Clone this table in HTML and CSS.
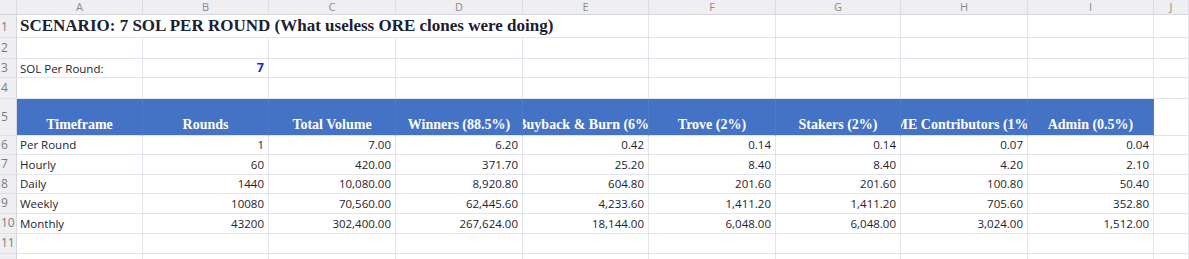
FILE: index.html
```html
<!DOCTYPE html>
<html>
<head>
<meta charset="utf-8">
<link rel="stylesheet" href="styles.css">
</head>
<body>
<div class="sheet">
  <div class="row hdr">
    <div class="c corner"></div>
    <div class="c colh">A</div><div class="c colh">B</div><div class="c colh">C</div><div class="c colh">D</div><div class="c colh">E</div><div class="c colh">F</div><div class="c colh">G</div><div class="c colh">H</div><div class="c colh">I</div><div class="c colh">J</div>
  </div>
  <div class="row r1">
    <div class="c rn">1</div>
    <div class="c nb"><span class="title">SCENARIO: 7 SOL PER ROUND (What useless ORE clones were doing)</span></div>
    <div class="c nb"></div><div class="c nb"></div><div class="c nb"></div><div class="c"></div><div class="c"></div><div class="c"></div><div class="c"></div><div class="c"></div><div class="c"></div>
  </div>
  <div class="row r2">
    <div class="c rn">2</div>
    <div class="c"></div><div class="c"></div><div class="c"></div><div class="c"></div><div class="c"></div><div class="c"></div><div class="c"></div><div class="c"></div><div class="c"></div><div class="c"></div>
  </div>
  <div class="row r3">
    <div class="c rn">3</div>
    <div class="c txt">SOL Per Round:</div><div class="c num input">7</div>
    <div class="c"></div><div class="c"></div><div class="c"></div><div class="c"></div><div class="c"></div><div class="c"></div><div class="c"></div><div class="c"></div>
  </div>
  <div class="row r4">
    <div class="c rn">4</div>
    <div class="c"></div><div class="c"></div><div class="c"></div><div class="c"></div><div class="c"></div><div class="c"></div><div class="c"></div><div class="c"></div><div class="c"></div><div class="c"></div>
  </div>
  <div class="row r5">
    <div class="c rn">5</div>
    <div class="c th"><span>Timeframe</span></div>
    <div class="c th"><span>Rounds</span></div>
    <div class="c th"><span>Total Volume</span></div>
    <div class="c th"><span>Winners (88.5%)</span></div>
    <div class="c th"><span>Buyback &amp; Burn (6%)</span></div>
    <div class="c th"><span>Trove (2%)</span></div>
    <div class="c th"><span>Stakers (2%)</span></div>
    <div class="c th"><span>ME Contributors (1%)</span></div>
    <div class="c th"><span>Admin (0.5%)</span></div>
    <div class="c"></div>
  </div>
  <div class="row r6">
    <div class="c rn">6</div>
    <div class="c txt">Per Round</div><div class="c num">1</div><div class="c num">7.00</div><div class="c num">6.20</div><div class="c num">0.42</div><div class="c num">0.14</div><div class="c num">0.14</div><div class="c num">0.07</div><div class="c num">0.04</div><div class="c"></div>
  </div>
  <div class="row r7">
    <div class="c rn">7</div>
    <div class="c txt">Hourly</div><div class="c num">60</div><div class="c num">420.00</div><div class="c num">371.70</div><div class="c num">25.20</div><div class="c num">8.40</div><div class="c num">8.40</div><div class="c num">4.20</div><div class="c num">2.10</div><div class="c"></div>
  </div>
  <div class="row r8">
    <div class="c rn">8</div>
    <div class="c txt">Daily</div><div class="c num">1440</div><div class="c num">10,080.00</div><div class="c num">8,920.80</div><div class="c num">604.80</div><div class="c num">201.60</div><div class="c num">201.60</div><div class="c num">100.80</div><div class="c num">50.40</div><div class="c"></div>
  </div>
  <div class="row r9">
    <div class="c rn">9</div>
    <div class="c txt">Weekly</div><div class="c num">10080</div><div class="c num">70,560.00</div><div class="c num">62,445.60</div><div class="c num">4,233.60</div><div class="c num">1,411.20</div><div class="c num">1,411.20</div><div class="c num">705.60</div><div class="c num">352.80</div><div class="c"></div>
  </div>
  <div class="row r10">
    <div class="c rn">10</div>
    <div class="c txt">Monthly</div><div class="c num">43200</div><div class="c num">302,400.00</div><div class="c num">267,624.00</div><div class="c num">18,144.00</div><div class="c num">6,048.00</div><div class="c num">6,048.00</div><div class="c num">3,024.00</div><div class="c num">1,512.00</div><div class="c"></div>
  </div>
  <div class="row r11">
    <div class="c rn">11</div>
    <div class="c"></div><div class="c"></div><div class="c"></div><div class="c"></div><div class="c"></div><div class="c"></div><div class="c"></div><div class="c"></div><div class="c"></div><div class="c"></div>
  </div>
  <div class="row r12">
    <div class="c rn"></div>
    <div class="c"></div><div class="c"></div><div class="c"></div><div class="c"></div><div class="c"></div><div class="c"></div><div class="c"></div><div class="c"></div><div class="c"></div><div class="c"></div>
  </div>
</div>
</body>
</html>
```
FILE: styles.css
```css
html, body {
  margin: 0;
  padding: 0;
  background: #ffffff;
  overflow: hidden;
}
.sheet {
  width: 1189px;
  height: 259px;
  overflow: hidden;
  font-family: "Open Sans", "Noto Sans", sans-serif;
  font-size: 11.5px;
  color: #24222e;
}
.row {
  display: grid;
  grid-template-columns: 17px 126px 126px 127px 127px 126px 127px 125px 127px 126px 1fr;
}
.hdr { height: 15px; }
.r1 { height: 23px; }
.r2 { height: 21px; }
.r3 { height: 19px; }
.r4 { height: 21px; }
.r5 { height: 37px; }
.r6 { height: 19px; }
.r7 { height: 20px; }
.r8 { height: 19px; }
.r9 { height: 20px; }
.r10 { height: 20px; }
.r11 { height: 20px; }
.r12 { height: 20px; }
.c {
  box-sizing: border-box;
  border-right: 1px solid #e4e4ec;
  border-bottom: 1px solid #e4e4ec;
  display: flex;
  align-items: flex-end;
  padding: 0 3px 1px 3px;
  white-space: nowrap;
  min-width: 0;
}
.c.nb { border-right-color: transparent; overflow: visible; }
.hdr .c {
  background: #efeff1;
  border-bottom: 1px solid #d6d6e2;
  border-right: 1px solid #dcdce4;
  color: #8a8a8e;
  font-size: 11px;
  justify-content: center;
  align-items: center;
  padding: 0;
  line-height: 14px;
}
.c.rn {
  background: #efeff1;
  border-right: 1px solid #d6d6e2;
  border-bottom: 1px solid #e0e0e6;
  color: #7c7c80;
  font-size: 12px;
  padding: 0 0 1px 1px;
  justify-content: flex-start;
  align-items: center;
}
.title {
  font-family: "Liberation Serif", serif;
  font-weight: bold;
  font-size: 17px;
  color: #1c2030;
  line-height: 20px;
  position: relative;
  z-index: 1;
}
.r1 .c { align-items: center; padding-top: 1px; }
.txt { justify-content: flex-start; }
.num { justify-content: flex-end; padding-right: 4px; }
.input {
  color: #1f1fcc;
  font-weight: bold;
  font-size: 12.5px;
}
.th {
  background: #4472c4;
  border-right: 1px solid #5078c6;
  border-bottom: 1px solid #e4e4ec;
  color: #ffffff;
  font-family: "Liberation Serif", serif;
  font-weight: bold;
  font-size: 14px;
  justify-content: center;
  overflow: hidden;
  padding: 0 0 2px 0;
}
.th span { flex: none; }
.r5 .c, .r6 .c, .r7 .c, .r8 .c, .r9 .c, .r10 .c, .r11 .c { line-height: 16px; }
```
